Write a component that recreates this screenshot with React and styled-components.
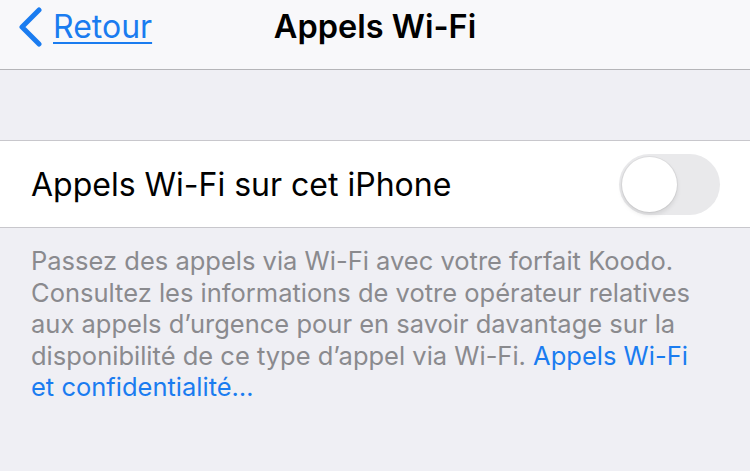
import React from 'react';
import styled, { createGlobalStyle } from 'styled-components';

const GlobalStyle = createGlobalStyle`
  html, body {
    margin: 0;
    padding: 0;
    background: #efeff4;
  }
  body {
    font-family: Inter, Roboto, "Liberation Sans", sans-serif;
    -webkit-font-smoothing: antialiased;
  }
`;

const Screen = styled.div`
  width: 750px;
  height: 471px;
  overflow: hidden;
  background: #efeff4;
`;

const NavBar = styled.div`
  height: 70px;
  background: #f8f8fa;
  border-bottom: 1px solid #b5b5b8;
  display: grid;
  grid-template-columns: 1fr auto 1fr;
  align-items: center;
  box-sizing: border-box;
`;

const BackButton = styled.a`
  display: flex;
  align-items: center;
  gap: 9px;
  padding-left: 18px;
  color: #1a7cf0;
  font-size: 32px;
  text-decoration: underline;
  text-underline-offset: 4px;
  text-decoration-thickness: 2px;
  margin-top: -16px;
  cursor: pointer;
`;

const Title = styled.div`
  font-size: 32.5px;
  font-weight: 600;
  color: #000;
  margin-top: -16px;
`;

const Spacer = styled.div`
  height: 70px;
`;

const Group = styled.div`
  background: #fff;
  border-top: 1px solid #c8c7cc;
  border-bottom: 1px solid #c8c7cc;
`;

const Row = styled.div`
  height: 86px;
  display: flex;
  align-items: center;
  justify-content: space-between;
  padding: 0 30px 0 31px;
`;

const RowLabel = styled.div`
  font-size: 32px;
  color: #000;
`;

const Track = styled.div`
  width: 101px;
  height: 61px;
  border-radius: 31px;
  background: ${p => (p.$on ? '#4cd964' : '#e9e9eb')};
  position: relative;
  box-sizing: border-box;
`;

const Knob = styled.div`
  position: absolute;
  top: 3px;
  left: ${p => (p.$on ? '43px' : '3px')};
  width: 55px;
  height: 55px;
  border-radius: 50%;
  background: #fff;
  box-shadow: 0 3px 5px rgba(0, 0, 0, 0.1), 0 0 0 1px rgba(0, 0, 0, 0.05);
`;

const Footer = styled.div`
  padding: 17px 45px 0 31px;
  font-size: 25.5px;
  line-height: 31.5px;
  color: #8a8a8e;
`;

const Link = styled.span`
  color: #1a7cf0;
`;

function Chevron() {
  return (
    <svg width="26" height="40" viewBox="0 0 26 40">
      <polyline
        points="21,3 4,20 21,37"
        fill="none"
        stroke="#1a7cf0"
        strokeWidth="5"
        strokeLinecap="round"
        strokeLinejoin="round"
      />
    </svg>
  );
}

function Toggle({ on }) {
  return (
    <Track $on={on}>
      <Knob $on={on} />
    </Track>
  );
}

export default function App() {
  return (
    <Screen>
      <GlobalStyle />
      <NavBar>
        <BackButton>
          <Chevron />
          Retour
        </BackButton>
        <Title>Appels Wi-Fi</Title>
        <div />
      </NavBar>
      <Spacer />
      <Group>
        <Row>
          <RowLabel>Appels Wi-Fi sur cet iPhone</RowLabel>
          <Toggle on={false} />
        </Row>
      </Group>
      <Footer>
        Passez des appels via Wi-Fi avec votre forfait Koodo. Consultez les
        informations de votre opérateur relatives aux appels d’urgence pour en
        savoir davantage sur la disponibilité de ce type d’appel via Wi-Fi.{' '}
        <Link>Appels Wi-Fi et confidentialité…</Link>
      </Footer>
    </Screen>
  );
}
